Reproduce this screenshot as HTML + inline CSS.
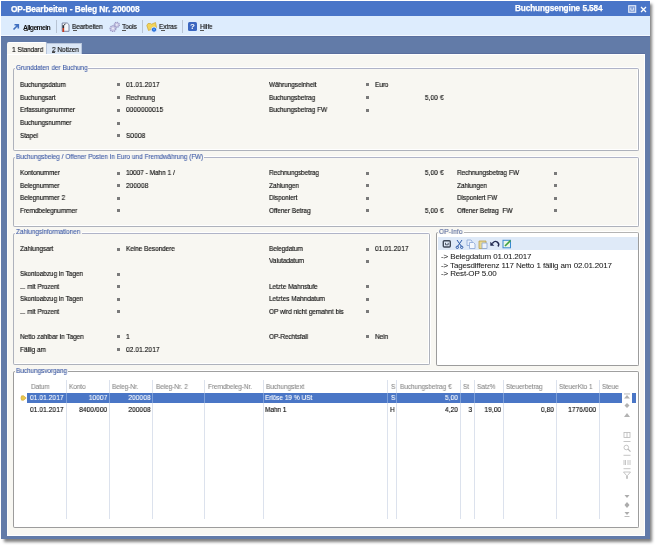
<!DOCTYPE html><html><head><meta charset="utf-8"><style>
html,body{margin:0;padding:0;background:#fff;width:659px;height:548px;overflow:hidden;position:relative;font-family:"Liberation Sans",sans-serif;}
body>div,body>svg{position:absolute;box-sizing:border-box;}
.t{line-height:10px;white-space:pre;will-change:transform;}
</style></head><body>
<div style="left:4px;top:4px;width:648px;height:538px;background:rgba(0,0,0,0.5);filter:blur(1.8px);"></div>
<div style="left:1px;top:1px;width:649px;height:538px;background:#627ba8;"></div>
<div style="left:1px;top:1px;width:649px;height:15px;background:#4975c8;"></div>
<div class="t" style="left:10.5px;top:4.29px;font-size:8.4px;letter-spacing:-0.15px;word-spacing:0.3px;color:#fff;font-weight:bold;-webkit-text-stroke:0.25px #fff;">OP-Bearbeiten - Beleg Nr. 200008</div>
<div class="t" style="right:57.00px;top:4.36px;font-size:8.2px;letter-spacing:-0.1px;word-spacing:0.3px;color:#fff;font-weight:bold;-webkit-text-stroke:0.25px #fff;">Buchungsengine 5.584</div>
<svg style="left:628px;top:5px" width="9" height="8"><rect x="0.7" y="0.7" width="7" height="6.6" fill="rgba(255,255,255,0.3)" stroke="#e4ecfa" stroke-width="1.1"/><path d="M2.8 2.6V5.2H5.6V2.6" stroke="#e4ecfa" stroke-width="0.9" fill="none"/></svg>
<svg style="left:640px;top:5.5px" width="7" height="7"><path d="M1 1L6 6M6 1L1 6" stroke="#fff" stroke-width="1.3"/></svg>
<div style="left:1px;top:16px;width:649px;height:20px;background:#ddecfd;"></div>
<div style="left:1px;top:35px;width:649px;height:1px;background:#f2f8ff;"></div>
<div style="left:1px;top:36px;width:649px;height:1px;background:#5a6f9e;"></div>
<div style="left:7px;top:53px;width:638px;height:1px;background:#5a6f9e;"></div>
<div style="left:7px;top:54px;width:638px;height:482px;background:#f8f7f2;"></div>
<div style="left:7px;top:54px;width:638px;height:1px;background:#fff;"></div>
<div style="left:7px;top:54px;width:1px;height:482px;background:#fcfdfc;"></div>
<div style="left:643.5px;top:54px;width:1.5px;height:482px;background:#fff;"></div>
<div style="left:7px;top:534.5px;width:638px;height:1.5px;background:#fff;"></div>
<div style="left:6.5px;top:42px;width:40px;height:12px;background:#f8f7f2;border-top:1px solid #fff;border-radius:2px 2px 0 0;"></div>
<div style="left:46px;top:43px;width:35.5px;height:11px;background:#dce8f7;border:1px solid #b8c6dc;border-bottom:none;"></div>
<div class="t" style="left:12.3px;top:44.60px;font-size:7.5px;letter-spacing:-0.12px;word-spacing:0.3px;color:#111;font-weight:normal;-webkit-text-stroke:0.16px #111;transform:scaleX(0.87);transform-origin:0 0;">1 Standard</div>
<div class="t" style="left:51.6px;top:44.80px;font-size:7.5px;letter-spacing:-0.12px;word-spacing:0.3px;color:#111;font-weight:normal;-webkit-text-stroke:0.16px #111;transform:scaleX(0.87);transform-origin:0 0;">2 Notizen</div>
<div style="left:51.8px;top:52.2px;width:3.5px;height:0.8px;background:#444;"></div>
<svg style="left:12px;top:23px" width="8" height="8"><path d="M1.5 6.5L6 2M2.5 1.8H6.3V5.6" stroke="#3f6fc0" stroke-width="1.6" fill="none"/></svg>
<div class="t" style="left:23.3px;top:22.61px;font-size:6.9px;letter-spacing:-0.65px;word-spacing:0.3px;color:#111;font-weight:bold;">Allgemein</div>
<div style="left:23.6px;top:29.9px;width:4px;height:0.7px;background:#555;"></div>
<div style="left:55.5px;top:20px;width:1px;height:13px;background:#b8c4d4;"></div>
<svg style="left:61px;top:21.5px" width="9" height="11"><path d="M1.2 1H6.3L8 2.7V9.3H1.2Z" fill="#f4f6fa" stroke="#6f7c98" stroke-width="0.9"/><path d="M2.3 3.2L2.3 6" stroke="#303038" stroke-width="1.7"/><path d="M2.3 6L2.3 10" stroke="#c83a20" stroke-width="1.7"/><path d="M3 3L4.5 2" stroke="#303038" stroke-width="0.9"/></svg>
<div class="t" style="left:72.4px;top:22.40px;font-size:7.5px;letter-spacing:-0.12px;word-spacing:0.3px;color:#111;font-weight:normal;-webkit-text-stroke:0.16px #111;transform:scaleX(0.87);transform-origin:0 0;">Bearbeiten</div>
<div style="left:72.6px;top:29.9px;width:4px;height:0.7px;background:#555;"></div>
<svg style="left:109px;top:21px" width="12" height="12"><circle cx="7.8" cy="3.8" r="2.6" fill="#c4c2e2" stroke="#9a98c4" stroke-width="1.1" stroke-dasharray="1.3 0.7"/><circle cx="7.8" cy="3.8" r="0.9" fill="#eeeef8"/><circle cx="4" cy="7.6" r="2.9" fill="#c8c6e4" stroke="#9a98c4" stroke-width="1.2" stroke-dasharray="1.4 0.7"/><circle cx="4" cy="7.6" r="1" fill="#eeeef8"/></svg>
<div class="t" style="left:121.7px;top:22.40px;font-size:7.5px;letter-spacing:-0.12px;word-spacing:0.3px;color:#111;font-weight:normal;-webkit-text-stroke:0.16px #111;transform:scaleX(0.87);transform-origin:0 0;">Tools</div>
<div style="left:121.9px;top:29.9px;width:4px;height:0.7px;background:#555;"></div>
<div style="left:141.8px;top:20px;width:1px;height:13px;background:#b8c4d4;"></div>
<svg style="left:146px;top:20.5px" width="12" height="12"><path d="M0.8 4.5L2 2.5H4.5L5.5 3.2L9.5 1.5L10.5 6.5L2.5 9.5Z" fill="#f2d45a" stroke="#c9a53a" stroke-width="0.7"/><circle cx="8" cy="8.6" r="2.6" fill="#1f6ad6" stroke="#e8f0ff" stroke-width="0.8"/><circle cx="8" cy="8.6" r="1" fill="#5aa0ff"/></svg>
<div class="t" style="left:158.8px;top:22.40px;font-size:7.5px;letter-spacing:-0.12px;word-spacing:0.3px;color:#111;font-weight:normal;-webkit-text-stroke:0.16px #111;transform:scaleX(0.87);transform-origin:0 0;">Extras</div>
<div style="left:161.3px;top:29.9px;width:3.5px;height:0.7px;background:#555;"></div>
<div style="left:182.3px;top:20px;width:1px;height:13px;background:#b8c4d4;"></div>
<div style="left:188px;top:22px;width:9px;height:9px;background:#3a66c0;border-radius:1.5px;color:#fff;font-size:8px;font-weight:bold;line-height:9px;text-align:center;">?</div>
<div class="t" style="left:199.6px;top:22.40px;font-size:7.5px;letter-spacing:-0.12px;word-spacing:0.3px;color:#111;font-weight:normal;-webkit-text-stroke:0.16px #111;transform:scaleX(0.87);transform-origin:0 0;">Hilfe</div>
<div style="left:199.8px;top:29.9px;width:4px;height:0.7px;background:#555;"></div>
<div style="left:13px;top:68px;width:626px;height:83px;border:1px solid #aeb2bc;border-radius:2px;border-top-color:#b0b4c8;box-shadow:0 -1px 0 #fff, inset 0 -1px 0 #fff, 1px 0 0 #fff, inset -1px 0 0 #fff;"></div>
<div style="left:14.5px;top:65px;width:73px;height:5px;background:#f8f7f2;"></div>
<div class="t" style="left:16px;top:62.80px;font-size:7.5px;letter-spacing:-0.12px;word-spacing:0.3px;color:#3d5aa6;font-weight:normal;-webkit-text-stroke:0.1px #3d5aa6;transform:scaleX(0.87);transform-origin:0 0;">Grunddaten der Buchung</div>
<div style="left:13px;top:157px;width:626px;height:70px;border:1px solid #aeb2bc;border-radius:2px;border-top-color:#b0b4c8;box-shadow:0 -1px 0 #fff, inset 0 -1px 0 #fff, 1px 0 0 #fff, inset -1px 0 0 #fff;"></div>
<div style="left:14.5px;top:154px;width:189px;height:5px;background:#f8f7f2;"></div>
<div class="t" style="left:16px;top:152.00px;font-size:7.5px;letter-spacing:-0.12px;word-spacing:0.3px;color:#3d5aa6;font-weight:normal;-webkit-text-stroke:0.1px #3d5aa6;transform:scaleX(0.87);transform-origin:0 0;">Buchungsbeleg / Offener Posten in Euro und Fremdwährung (FW)</div>
<div style="left:13px;top:233px;width:417px;height:132px;border:1px solid #aeb2bc;border-radius:2px;border-top-color:#b0b4c8;box-shadow:0 -1px 0 #fff, inset 0 -1px 0 #fff, 1px 0 0 #fff, inset -1px 0 0 #fff;"></div>
<div style="left:14.5px;top:230px;width:67px;height:5px;background:#f8f7f2;"></div>
<div class="t" style="left:16px;top:227.20px;font-size:7.5px;letter-spacing:-0.12px;word-spacing:0.3px;color:#3d5aa6;font-weight:normal;-webkit-text-stroke:0.1px #3d5aa6;transform:scaleX(0.87);transform-origin:0 0;">Zahlungsinformationen</div>
<div style="left:436px;top:232px;width:203px;height:134px;border:1px solid #9c9c9c;border-radius:2px;border-top-color:#b4b4b4;box-shadow:0 -1px 0 #fff, inset 0 -1px 0 #fff, 1px 0 0 #fff, inset -1px 0 0 #fff;background:#fff;"></div>
<div style="left:437.8px;top:229px;width:26px;height:5px;background:#f8f7f2;"></div>
<div class="t" style="left:439.3px;top:226.80px;font-size:7.5px;letter-spacing:0.2px;word-spacing:0.3px;color:#55689c;font-weight:normal;-webkit-text-stroke:0.1px #55689c;transform:scaleX(0.87);transform-origin:0 0;">OP-Info</div>
<div style="left:13px;top:371px;width:626px;height:157px;border:1px solid #9c9c9c;border-radius:2px;border-top-color:#a0a0a0;box-shadow:0 -1px 0 #fff, inset 0 -1px 0 #fff, 1px 0 0 #fff, inset -1px 0 0 #fff;background:#fff;"></div>
<div style="left:14.5px;top:368px;width:53px;height:5px;background:#f8f7f2;"></div>
<div class="t" style="left:16px;top:366.00px;font-size:7.5px;letter-spacing:-0.12px;word-spacing:0.3px;color:#3d5aa6;font-weight:normal;-webkit-text-stroke:0.1px #3d5aa6;transform:scaleX(0.87);transform-origin:0 0;">Buchungsvorgang</div>
<div class="t" style="left:20px;top:79.90px;font-size:7.5px;letter-spacing:-0.12px;word-spacing:0.3px;color:#111;font-weight:normal;-webkit-text-stroke:0.16px #111;transform:scaleX(0.87);transform-origin:0 0;">Buchungsdatum</div>
<div style="left:117.3px;top:83.40px;width:3px;height:3px;background:#7a7a7a;"></div>
<div class="t" style="left:125.9px;top:79.90px;font-size:7.5px;letter-spacing:0.12px;word-spacing:0.3px;color:#111;font-weight:normal;-webkit-text-stroke:0.16px #111;transform:scaleX(0.87);transform-origin:0 0;">01.01.2017</div>
<div class="t" style="left:20px;top:92.60px;font-size:7.5px;letter-spacing:-0.12px;word-spacing:0.3px;color:#111;font-weight:normal;-webkit-text-stroke:0.16px #111;transform:scaleX(0.87);transform-origin:0 0;">Buchungsart</div>
<div style="left:117.3px;top:96.10px;width:3px;height:3px;background:#7a7a7a;"></div>
<div class="t" style="left:125.9px;top:92.60px;font-size:7.5px;letter-spacing:-0.12px;word-spacing:0.3px;color:#111;font-weight:normal;-webkit-text-stroke:0.16px #111;transform:scaleX(0.87);transform-origin:0 0;">Rechnung</div>
<div class="t" style="left:20px;top:105.30px;font-size:7.5px;letter-spacing:-0.12px;word-spacing:0.3px;color:#111;font-weight:normal;-webkit-text-stroke:0.16px #111;transform:scaleX(0.87);transform-origin:0 0;">Erfassungsnummer</div>
<div style="left:117.3px;top:108.80px;width:3px;height:3px;background:#7a7a7a;"></div>
<div class="t" style="left:125.9px;top:105.30px;font-size:7.5px;letter-spacing:0.12px;word-spacing:0.3px;color:#111;font-weight:normal;-webkit-text-stroke:0.16px #111;transform:scaleX(0.87);transform-origin:0 0;">0000000015</div>
<div class="t" style="left:20px;top:118.00px;font-size:7.5px;letter-spacing:-0.12px;word-spacing:0.3px;color:#111;font-weight:normal;-webkit-text-stroke:0.16px #111;transform:scaleX(0.87);transform-origin:0 0;">Buchungsnummer</div>
<div style="left:117.3px;top:121.50px;width:3px;height:3px;background:#7a7a7a;"></div>
<div class="t" style="left:20px;top:130.60px;font-size:7.5px;letter-spacing:-0.12px;word-spacing:0.3px;color:#111;font-weight:normal;-webkit-text-stroke:0.16px #111;transform:scaleX(0.87);transform-origin:0 0;">Stapel</div>
<div style="left:117.3px;top:134.10px;width:3px;height:3px;background:#7a7a7a;"></div>
<div class="t" style="left:125.9px;top:130.60px;font-size:7.5px;letter-spacing:0.12px;word-spacing:0.3px;color:#111;font-weight:normal;-webkit-text-stroke:0.16px #111;transform:scaleX(0.87);transform-origin:0 0;">S0008</div>
<div class="t" style="left:269.4px;top:79.90px;font-size:7.5px;letter-spacing:-0.12px;word-spacing:0.3px;color:#111;font-weight:normal;-webkit-text-stroke:0.16px #111;transform:scaleX(0.87);transform-origin:0 0;">Währungseinheit</div>
<div style="left:366.3px;top:83.40px;width:3px;height:3px;background:#7a7a7a;"></div>
<div class="t" style="left:375.2px;top:79.90px;font-size:7.5px;letter-spacing:-0.12px;word-spacing:0.3px;color:#111;font-weight:normal;-webkit-text-stroke:0.16px #111;transform:scaleX(0.87);transform-origin:0 0;">Euro</div>
<div class="t" style="left:269.4px;top:92.60px;font-size:7.5px;letter-spacing:-0.12px;word-spacing:0.3px;color:#111;font-weight:normal;-webkit-text-stroke:0.16px #111;transform:scaleX(0.87);transform-origin:0 0;">Buchungsbetrag</div>
<div style="left:366.3px;top:96.10px;width:3px;height:3px;background:#7a7a7a;"></div>
<div class="t" style="left:269.4px;top:105.30px;font-size:7.5px;letter-spacing:-0.12px;word-spacing:0.3px;color:#111;font-weight:normal;-webkit-text-stroke:0.16px #111;transform:scaleX(0.87);transform-origin:0 0;">Buchungsbetrag FW</div>
<div style="left:366.3px;top:108.80px;width:3px;height:3px;background:#7a7a7a;"></div>
<div class="t" style="right:215.50px;top:92.60px;font-size:7.5px;letter-spacing:0.12px;word-spacing:0.3px;color:#111;font-weight:normal;-webkit-text-stroke:0.16px #111;transform:scaleX(0.87);transform-origin:100% 0;">5,00 €</div>
<div class="t" style="left:20px;top:168.20px;font-size:7.5px;letter-spacing:-0.12px;word-spacing:0.3px;color:#111;font-weight:normal;-webkit-text-stroke:0.16px #111;transform:scaleX(0.87);transform-origin:0 0;">Kontonummer</div>
<div style="left:117.3px;top:171.70px;width:3px;height:3px;background:#7a7a7a;"></div>
<div class="t" style="left:125.9px;top:168.20px;font-size:7.5px;letter-spacing:-0.12px;word-spacing:0.3px;color:#111;font-weight:normal;-webkit-text-stroke:0.16px #111;transform:scaleX(0.87);transform-origin:0 0;">10007 - Mahn 1 /</div>
<div class="t" style="left:20px;top:180.80px;font-size:7.5px;letter-spacing:-0.12px;word-spacing:0.3px;color:#111;font-weight:normal;-webkit-text-stroke:0.16px #111;transform:scaleX(0.87);transform-origin:0 0;">Belegnummer</div>
<div style="left:117.3px;top:184.30px;width:3px;height:3px;background:#7a7a7a;"></div>
<div class="t" style="left:125.9px;top:180.80px;font-size:7.5px;letter-spacing:0.12px;word-spacing:0.3px;color:#111;font-weight:normal;-webkit-text-stroke:0.16px #111;transform:scaleX(0.87);transform-origin:0 0;">200008</div>
<div class="t" style="left:20px;top:193.30px;font-size:7.5px;letter-spacing:-0.12px;word-spacing:0.3px;color:#111;font-weight:normal;-webkit-text-stroke:0.16px #111;transform:scaleX(0.87);transform-origin:0 0;">Belegnummer 2</div>
<div style="left:117.3px;top:196.80px;width:3px;height:3px;background:#7a7a7a;"></div>
<div class="t" style="left:20px;top:205.90px;font-size:7.5px;letter-spacing:-0.12px;word-spacing:0.3px;color:#111;font-weight:normal;-webkit-text-stroke:0.16px #111;transform:scaleX(0.87);transform-origin:0 0;">Fremdbelegnummer</div>
<div style="left:117.3px;top:209.40px;width:3px;height:3px;background:#7a7a7a;"></div>
<div class="t" style="left:269.4px;top:168.20px;font-size:7.5px;letter-spacing:-0.12px;word-spacing:0.3px;color:#111;font-weight:normal;-webkit-text-stroke:0.16px #111;transform:scaleX(0.87);transform-origin:0 0;">Rechnungsbetrag</div>
<div style="left:366.3px;top:171.70px;width:3px;height:3px;background:#7a7a7a;"></div>
<div class="t" style="left:269.4px;top:180.80px;font-size:7.5px;letter-spacing:-0.12px;word-spacing:0.3px;color:#111;font-weight:normal;-webkit-text-stroke:0.16px #111;transform:scaleX(0.87);transform-origin:0 0;">Zahlungen</div>
<div style="left:366.3px;top:184.30px;width:3px;height:3px;background:#7a7a7a;"></div>
<div class="t" style="left:269.4px;top:193.30px;font-size:7.5px;letter-spacing:-0.12px;word-spacing:0.3px;color:#111;font-weight:normal;-webkit-text-stroke:0.16px #111;transform:scaleX(0.87);transform-origin:0 0;">Disponiert</div>
<div style="left:366.3px;top:196.80px;width:3px;height:3px;background:#7a7a7a;"></div>
<div class="t" style="left:269.4px;top:205.90px;font-size:7.5px;letter-spacing:-0.12px;word-spacing:0.3px;color:#111;font-weight:normal;-webkit-text-stroke:0.16px #111;transform:scaleX(0.87);transform-origin:0 0;">Offener Betrag</div>
<div style="left:366.3px;top:209.40px;width:3px;height:3px;background:#7a7a7a;"></div>
<div class="t" style="right:215.50px;top:168.20px;font-size:7.5px;letter-spacing:0.12px;word-spacing:0.3px;color:#111;font-weight:normal;-webkit-text-stroke:0.16px #111;transform:scaleX(0.87);transform-origin:100% 0;">5,00 €</div>
<div class="t" style="right:215.50px;top:205.90px;font-size:7.5px;letter-spacing:0.12px;word-spacing:0.3px;color:#111;font-weight:normal;-webkit-text-stroke:0.16px #111;transform:scaleX(0.87);transform-origin:100% 0;">5,00 €</div>
<div class="t" style="left:456.7px;top:168.20px;font-size:7.5px;letter-spacing:-0.12px;word-spacing:0.3px;color:#111;font-weight:normal;-webkit-text-stroke:0.16px #111;transform:scaleX(0.87);transform-origin:0 0;">Rechnungsbetrag FW</div>
<div style="left:554.2px;top:171.70px;width:3px;height:3px;background:#7a7a7a;"></div>
<div class="t" style="left:456.7px;top:180.80px;font-size:7.5px;letter-spacing:-0.12px;word-spacing:0.3px;color:#111;font-weight:normal;-webkit-text-stroke:0.16px #111;transform:scaleX(0.87);transform-origin:0 0;">Zahlungen</div>
<div style="left:554.2px;top:184.30px;width:3px;height:3px;background:#7a7a7a;"></div>
<div class="t" style="left:456.7px;top:193.30px;font-size:7.5px;letter-spacing:-0.12px;word-spacing:0.3px;color:#111;font-weight:normal;-webkit-text-stroke:0.16px #111;transform:scaleX(0.87);transform-origin:0 0;">Disponiert FW</div>
<div style="left:554.2px;top:196.80px;width:3px;height:3px;background:#7a7a7a;"></div>
<div class="t" style="left:456.7px;top:205.90px;font-size:7.5px;letter-spacing:-0.12px;word-spacing:0.3px;color:#111;font-weight:normal;-webkit-text-stroke:0.16px #111;transform:scaleX(0.87);transform-origin:0 0;">Offener Betrag  FW</div>
<div style="left:554.2px;top:209.40px;width:3px;height:3px;background:#7a7a7a;"></div>
<div class="t" style="left:20px;top:244.00px;font-size:7.5px;letter-spacing:-0.12px;word-spacing:0.3px;color:#111;font-weight:normal;-webkit-text-stroke:0.16px #111;transform:scaleX(0.87);transform-origin:0 0;">Zahlungsart</div>
<div style="left:117.3px;top:247.50px;width:3px;height:3px;background:#7a7a7a;"></div>
<div class="t" style="left:125.9px;top:244.00px;font-size:7.5px;letter-spacing:-0.12px;word-spacing:0.3px;color:#111;font-weight:normal;-webkit-text-stroke:0.16px #111;transform:scaleX(0.87);transform-origin:0 0;">Keine Besondere</div>
<div class="t" style="left:20px;top:269.00px;font-size:7.5px;letter-spacing:-0.12px;word-spacing:0.3px;color:#111;font-weight:normal;-webkit-text-stroke:0.16px #111;transform:scaleX(0.87);transform-origin:0 0;">Skontoabzug in Tagen</div>
<div style="left:117.3px;top:272.50px;width:3px;height:3px;background:#7a7a7a;"></div>
<div class="t" style="left:20px;top:281.70px;font-size:7.5px;letter-spacing:-0.12px;word-spacing:0.3px;color:#111;font-weight:normal;-webkit-text-stroke:0.16px #111;transform:scaleX(0.87);transform-origin:0 0;">... mit Prozent</div>
<div style="left:117.3px;top:285.20px;width:3px;height:3px;background:#7a7a7a;"></div>
<div class="t" style="left:20px;top:294.20px;font-size:7.5px;letter-spacing:-0.12px;word-spacing:0.3px;color:#111;font-weight:normal;-webkit-text-stroke:0.16px #111;transform:scaleX(0.87);transform-origin:0 0;">Skontoabzug in Tagen</div>
<div style="left:117.3px;top:297.70px;width:3px;height:3px;background:#7a7a7a;"></div>
<div class="t" style="left:20px;top:306.80px;font-size:7.5px;letter-spacing:-0.12px;word-spacing:0.3px;color:#111;font-weight:normal;-webkit-text-stroke:0.16px #111;transform:scaleX(0.87);transform-origin:0 0;">... mit Prozent</div>
<div style="left:117.3px;top:310.30px;width:3px;height:3px;background:#7a7a7a;"></div>
<div class="t" style="left:20px;top:331.80px;font-size:7.5px;letter-spacing:-0.12px;word-spacing:0.3px;color:#111;font-weight:normal;-webkit-text-stroke:0.16px #111;transform:scaleX(0.87);transform-origin:0 0;">Netto zahlbar in Tagen</div>
<div style="left:117.3px;top:335.30px;width:3px;height:3px;background:#7a7a7a;"></div>
<div class="t" style="left:125.9px;top:331.80px;font-size:7.5px;letter-spacing:-0.12px;word-spacing:0.3px;color:#111;font-weight:normal;-webkit-text-stroke:0.16px #111;transform:scaleX(0.87);transform-origin:0 0;">1</div>
<div class="t" style="left:20px;top:344.60px;font-size:7.5px;letter-spacing:-0.12px;word-spacing:0.3px;color:#111;font-weight:normal;-webkit-text-stroke:0.16px #111;transform:scaleX(0.87);transform-origin:0 0;">Fällig am</div>
<div style="left:117.3px;top:348.10px;width:3px;height:3px;background:#7a7a7a;"></div>
<div class="t" style="left:125.9px;top:344.60px;font-size:7.5px;letter-spacing:0.12px;word-spacing:0.3px;color:#111;font-weight:normal;-webkit-text-stroke:0.16px #111;transform:scaleX(0.87);transform-origin:0 0;">02.01.2017</div>
<div class="t" style="left:269.4px;top:244.00px;font-size:7.5px;letter-spacing:-0.12px;word-spacing:0.3px;color:#111;font-weight:normal;-webkit-text-stroke:0.16px #111;transform:scaleX(0.87);transform-origin:0 0;">Belegdatum</div>
<div style="left:366.3px;top:247.50px;width:3px;height:3px;background:#7a7a7a;"></div>
<div class="t" style="left:375.2px;top:244.00px;font-size:7.5px;letter-spacing:0.12px;word-spacing:0.3px;color:#111;font-weight:normal;-webkit-text-stroke:0.16px #111;transform:scaleX(0.87);transform-origin:0 0;">01.01.2017</div>
<div class="t" style="left:269.4px;top:256.40px;font-size:7.5px;letter-spacing:-0.12px;word-spacing:0.3px;color:#111;font-weight:normal;-webkit-text-stroke:0.16px #111;transform:scaleX(0.87);transform-origin:0 0;">Valutadatum</div>
<div style="left:366.3px;top:259.90px;width:3px;height:3px;background:#7a7a7a;"></div>
<div class="t" style="left:269.4px;top:281.70px;font-size:7.5px;letter-spacing:-0.12px;word-spacing:0.3px;color:#111;font-weight:normal;-webkit-text-stroke:0.16px #111;transform:scaleX(0.87);transform-origin:0 0;">Letzte Mahnstufe</div>
<div style="left:366.3px;top:285.20px;width:3px;height:3px;background:#7a7a7a;"></div>
<div class="t" style="left:269.4px;top:294.20px;font-size:7.5px;letter-spacing:-0.12px;word-spacing:0.3px;color:#111;font-weight:normal;-webkit-text-stroke:0.16px #111;transform:scaleX(0.87);transform-origin:0 0;">Letztes Mahndatum</div>
<div style="left:366.3px;top:297.70px;width:3px;height:3px;background:#7a7a7a;"></div>
<div class="t" style="left:269.4px;top:306.80px;font-size:7.5px;letter-spacing:-0.12px;word-spacing:0.3px;color:#111;font-weight:normal;-webkit-text-stroke:0.16px #111;transform:scaleX(0.87);transform-origin:0 0;">OP wird nicht gemahnt bis</div>
<div style="left:366.3px;top:310.30px;width:3px;height:3px;background:#7a7a7a;"></div>
<div class="t" style="left:269.4px;top:331.80px;font-size:7.5px;letter-spacing:-0.12px;word-spacing:0.3px;color:#111;font-weight:normal;-webkit-text-stroke:0.16px #111;transform:scaleX(0.87);transform-origin:0 0;">OP-Rechtsfall</div>
<div style="left:366.3px;top:335.30px;width:3px;height:3px;background:#7a7a7a;"></div>
<div class="t" style="left:375.2px;top:331.80px;font-size:7.5px;letter-spacing:-0.12px;word-spacing:0.3px;color:#111;font-weight:normal;-webkit-text-stroke:0.16px #111;transform:scaleX(0.87);transform-origin:0 0;">Nein</div>
<div style="left:437.5px;top:236.5px;width:200px;height:13.5px;background:#dfeaf8;"></div>
<svg style="left:442px;top:238.5px" width="72" height="10"><rect x="1.3" y="1.8" width="7" height="6.2" rx="1" fill="none" stroke="#404a58" stroke-width="1.4"/><path d="M3.5 3.8V5.8H6.2V3.8" stroke="#404a58" stroke-width="0.9" fill="none"/><g stroke="#2d5aa8" stroke-width="1" fill="none"><path d="M15 1L19.5 7.5M20 1L15.5 7.5"/><circle cx="15.3" cy="8.3" r="1.2"/><circle cx="19.7" cy="8.3" r="1.2"/></g><path d="M25 1H29L30 2V6.5H25Z" fill="#e8f0fb" stroke="#8aa6d6" stroke-width="0.8"/><path d="M27.5 3.5H31.5L33 5V9.5H27.5Z" fill="#f4f8fd" stroke="#8aa6d6" stroke-width="0.8"/><path d="M37 2H44V9.5H37Z" fill="#e8d890" stroke="#b8a050" stroke-width="0.8"/><path d="M40 4H45V9.5H40Z" fill="#eef3fb" stroke="#8aa6d6" stroke-width="0.8"/><path d="M56 7.5A3 3 0 0 0 51 3.8L50.2 4.5" stroke="#222a50" stroke-width="1.4" fill="none"/><path d="M48.3 2.8V6.8H52.3Z" fill="#222a50"/><rect x="61" y="1.3" width="7.5" height="7.5" fill="#eaf6ea" stroke="#3a8ad0" stroke-width="1"/><path d="M63 7L68.5 1.5" stroke="#40a040" stroke-width="1.6"/></svg>
<div class="t" style="left:441.2px;top:252.03px;font-size:8px;letter-spacing:-0.2px;word-spacing:0.3px;color:#1a1a1a;font-weight:normal;-webkit-text-stroke:0.05px #1a1a1a;">-&gt; Belegdatum 01.01.2017</div>
<div class="t" style="left:441.2px;top:260.53px;font-size:8px;letter-spacing:-0.2px;word-spacing:0.3px;color:#1a1a1a;font-weight:normal;-webkit-text-stroke:0.05px #1a1a1a;">-&gt; Tagesdifferenz 117 Netto 1 fällig am 02.01.2017</div>
<div class="t" style="left:441.2px;top:269.03px;font-size:8px;letter-spacing:-0.2px;word-spacing:0.3px;color:#1a1a1a;font-weight:normal;-webkit-text-stroke:0.05px #1a1a1a;">-&gt; Rest-OP 5.00</div>
<div style="left:27px;top:392.6px;width:594.5px;height:10.6px;background:#4a76c6;"></div>
<div style="left:632px;top:392.6px;width:3.8px;height:10.6px;background:#4a76c6;"></div>
<div style="left:66.2px;top:380px;width:1px;height:138.5px;background:#dce2ed;"></div>
<div style="left:66.2px;top:392.6px;width:1px;height:10.6px;background:#7d9fd8;"></div>
<div style="left:108.9px;top:380px;width:1px;height:138.5px;background:#dce2ed;"></div>
<div style="left:108.9px;top:392.6px;width:1px;height:10.6px;background:#7d9fd8;"></div>
<div style="left:151.7px;top:380px;width:1px;height:138.5px;background:#dce2ed;"></div>
<div style="left:151.7px;top:392.6px;width:1px;height:10.6px;background:#7d9fd8;"></div>
<div style="left:204.0px;top:380px;width:1px;height:138.5px;background:#dce2ed;"></div>
<div style="left:204.0px;top:392.6px;width:1px;height:10.6px;background:#7d9fd8;"></div>
<div style="left:262.8px;top:380px;width:1px;height:138.5px;background:#dce2ed;"></div>
<div style="left:262.8px;top:392.6px;width:1px;height:10.6px;background:#7d9fd8;"></div>
<div style="left:387.2px;top:380px;width:1px;height:138.5px;background:#dce2ed;"></div>
<div style="left:387.2px;top:392.6px;width:1px;height:10.6px;background:#7d9fd8;"></div>
<div style="left:396.2px;top:380px;width:1px;height:138.5px;background:#dce2ed;"></div>
<div style="left:396.2px;top:392.6px;width:1px;height:10.6px;background:#7d9fd8;"></div>
<div style="left:460.2px;top:380px;width:1px;height:138.5px;background:#dce2ed;"></div>
<div style="left:460.2px;top:392.6px;width:1px;height:10.6px;background:#7d9fd8;"></div>
<div style="left:473.8px;top:380px;width:1px;height:138.5px;background:#dce2ed;"></div>
<div style="left:473.8px;top:392.6px;width:1px;height:10.6px;background:#7d9fd8;"></div>
<div style="left:502.8px;top:380px;width:1px;height:138.5px;background:#dce2ed;"></div>
<div style="left:502.8px;top:392.6px;width:1px;height:10.6px;background:#7d9fd8;"></div>
<div style="left:555.5px;top:380px;width:1px;height:138.5px;background:#dce2ed;"></div>
<div style="left:555.5px;top:392.6px;width:1px;height:10.6px;background:#7d9fd8;"></div>
<div style="left:598.7px;top:380px;width:1px;height:138.5px;background:#dce2ed;"></div>
<div style="left:598.7px;top:392.6px;width:1px;height:10.6px;background:#7d9fd8;"></div>
<div class="t" style="left:30.9px;top:381.70px;font-size:7.5px;letter-spacing:-0.12px;word-spacing:0.3px;color:#8a8a8a;font-weight:normal;-webkit-text-stroke:0.1px #8a8a8a;transform:scaleX(0.87);transform-origin:0 0;">Datum</div>
<div class="t" style="left:69px;top:381.70px;font-size:7.5px;letter-spacing:-0.12px;word-spacing:0.3px;color:#8a8a8a;font-weight:normal;-webkit-text-stroke:0.1px #8a8a8a;transform:scaleX(0.87);transform-origin:0 0;">Konto</div>
<div class="t" style="left:112.3px;top:381.70px;font-size:7.5px;letter-spacing:-0.12px;word-spacing:0.3px;color:#8a8a8a;font-weight:normal;-webkit-text-stroke:0.1px #8a8a8a;transform:scaleX(0.87);transform-origin:0 0;">Beleg-Nr.</div>
<div class="t" style="left:156.2px;top:381.70px;font-size:7.5px;letter-spacing:-0.12px;word-spacing:0.3px;color:#8a8a8a;font-weight:normal;-webkit-text-stroke:0.1px #8a8a8a;transform:scaleX(0.87);transform-origin:0 0;">Beleg-Nr. 2</div>
<div class="t" style="left:208.3px;top:381.70px;font-size:7.5px;letter-spacing:-0.12px;word-spacing:0.3px;color:#8a8a8a;font-weight:normal;-webkit-text-stroke:0.1px #8a8a8a;transform:scaleX(0.87);transform-origin:0 0;">Fremdbeleg-Nr.</div>
<div class="t" style="left:265.7px;top:381.70px;font-size:7.5px;letter-spacing:-0.12px;word-spacing:0.3px;color:#8a8a8a;font-weight:normal;-webkit-text-stroke:0.1px #8a8a8a;transform:scaleX(0.87);transform-origin:0 0;">Buchungstext</div>
<div class="t" style="left:390.7px;top:381.70px;font-size:7.5px;letter-spacing:-0.12px;word-spacing:0.3px;color:#8a8a8a;font-weight:normal;-webkit-text-stroke:0.1px #8a8a8a;transform:scaleX(0.87);transform-origin:0 0;">S</div>
<div class="t" style="left:400px;top:381.70px;font-size:7.5px;letter-spacing:-0.12px;word-spacing:0.3px;color:#8a8a8a;font-weight:normal;-webkit-text-stroke:0.1px #8a8a8a;transform:scaleX(0.87);transform-origin:0 0;">Buchungsbetrag €</div>
<div class="t" style="left:463.3px;top:381.70px;font-size:7.5px;letter-spacing:-0.12px;word-spacing:0.3px;color:#8a8a8a;font-weight:normal;-webkit-text-stroke:0.1px #8a8a8a;transform:scaleX(0.87);transform-origin:0 0;">St</div>
<div class="t" style="left:477.3px;top:381.70px;font-size:7.5px;letter-spacing:-0.12px;word-spacing:0.3px;color:#8a8a8a;font-weight:normal;-webkit-text-stroke:0.1px #8a8a8a;transform:scaleX(0.87);transform-origin:0 0;">Satz%</div>
<div class="t" style="left:506px;top:381.70px;font-size:7.5px;letter-spacing:-0.12px;word-spacing:0.3px;color:#8a8a8a;font-weight:normal;-webkit-text-stroke:0.1px #8a8a8a;transform:scaleX(0.87);transform-origin:0 0;">Steuerbetrag</div>
<div class="t" style="left:559px;top:381.70px;font-size:7.5px;letter-spacing:-0.12px;word-spacing:0.3px;color:#8a8a8a;font-weight:normal;-webkit-text-stroke:0.1px #8a8a8a;transform:scaleX(0.87);transform-origin:0 0;">SteuerKto 1</div>
<div class="t" style="left:602.3px;top:381.70px;font-size:7.5px;letter-spacing:-0.12px;word-spacing:0.3px;color:#8a8a8a;font-weight:normal;-webkit-text-stroke:0.1px #8a8a8a;transform:scaleX(0.87);transform-origin:0 0;">Steue</div>
<div class="t" style="left:30.3px;top:393.40px;font-size:7.5px;letter-spacing:0.12px;word-spacing:0.3px;color:#fff;font-weight:normal;-webkit-text-stroke:0.1px #fff;transform:scaleX(0.87);transform-origin:0 0;">01.01.2017</div>
<div class="t" style="right:551.30px;top:393.40px;font-size:7.5px;letter-spacing:0.12px;word-spacing:0.3px;color:#fff;font-weight:normal;-webkit-text-stroke:0.1px #fff;transform:scaleX(0.87);transform-origin:100% 0;">10007</div>
<div class="t" style="right:508.50px;top:393.40px;font-size:7.5px;letter-spacing:0.12px;word-spacing:0.3px;color:#fff;font-weight:normal;-webkit-text-stroke:0.1px #fff;transform:scaleX(0.87);transform-origin:100% 0;">200008</div>
<div class="t" style="left:265px;top:393.40px;font-size:7.5px;letter-spacing:-0.12px;word-spacing:0.3px;color:#fff;font-weight:normal;-webkit-text-stroke:0.1px #fff;transform:scaleX(0.87);transform-origin:0 0;">Erlöse 19 % USt</div>
<div class="t" style="left:390.7px;top:393.40px;font-size:7.5px;letter-spacing:-0.12px;word-spacing:0.3px;color:#fff;font-weight:normal;-webkit-text-stroke:0.1px #fff;transform:scaleX(0.87);transform-origin:0 0;">S</div>
<div class="t" style="right:201.30px;top:393.40px;font-size:7.5px;letter-spacing:0.12px;word-spacing:0.3px;color:#fff;font-weight:normal;-webkit-text-stroke:0.1px #fff;transform:scaleX(0.87);transform-origin:100% 0;">5,00</div>
<div class="t" style="left:30.3px;top:405.00px;font-size:7.5px;letter-spacing:0.12px;word-spacing:0.3px;color:#111;font-weight:normal;-webkit-text-stroke:0.16px #111;transform:scaleX(0.87);transform-origin:0 0;">01.01.2017</div>
<div class="t" style="right:551.30px;top:405.00px;font-size:7.5px;letter-spacing:0.12px;word-spacing:0.3px;color:#111;font-weight:normal;-webkit-text-stroke:0.16px #111;transform:scaleX(0.87);transform-origin:100% 0;">8400/000</div>
<div class="t" style="right:508.50px;top:405.00px;font-size:7.5px;letter-spacing:0.12px;word-spacing:0.3px;color:#111;font-weight:normal;-webkit-text-stroke:0.16px #111;transform:scaleX(0.87);transform-origin:100% 0;">200008</div>
<div class="t" style="left:265px;top:405.00px;font-size:7.5px;letter-spacing:-0.12px;word-spacing:0.3px;color:#111;font-weight:normal;-webkit-text-stroke:0.16px #111;transform:scaleX(0.87);transform-origin:0 0;">Mahn 1</div>
<div class="t" style="left:390.2px;top:405.00px;font-size:7.5px;letter-spacing:-0.12px;word-spacing:0.3px;color:#111;font-weight:normal;-webkit-text-stroke:0.16px #111;transform:scaleX(0.87);transform-origin:0 0;">H</div>
<div class="t" style="right:201.30px;top:405.00px;font-size:7.5px;letter-spacing:0.12px;word-spacing:0.3px;color:#111;font-weight:normal;-webkit-text-stroke:0.16px #111;transform:scaleX(0.87);transform-origin:100% 0;">4,20</div>
<div class="t" style="right:187.30px;top:405.00px;font-size:7.5px;letter-spacing:-0.12px;word-spacing:0.3px;color:#111;font-weight:normal;-webkit-text-stroke:0.16px #111;transform:scaleX(0.87);transform-origin:100% 0;">3</div>
<div class="t" style="right:158.00px;top:405.00px;font-size:7.5px;letter-spacing:0.12px;word-spacing:0.3px;color:#111;font-weight:normal;-webkit-text-stroke:0.16px #111;transform:scaleX(0.87);transform-origin:100% 0;">19,00</div>
<div class="t" style="right:105.00px;top:405.00px;font-size:7.5px;letter-spacing:0.12px;word-spacing:0.3px;color:#111;font-weight:normal;-webkit-text-stroke:0.16px #111;transform:scaleX(0.87);transform-origin:100% 0;">0,80</div>
<div class="t" style="right:62.30px;top:405.00px;font-size:7.5px;letter-spacing:0.12px;word-spacing:0.3px;color:#111;font-weight:normal;-webkit-text-stroke:0.16px #111;transform:scaleX(0.87);transform-origin:100% 0;">1776/000</div>
<svg style="left:20px;top:394.5px" width="7" height="7"><path d="M1.6 0.8H3.6L6.2 3L3.6 5.2H1.6Q0.3 3 1.6 0.8Z" fill="#eac84c" stroke="#c9a030" stroke-width="0.6"/></svg>
<svg style="left:622px;top:392px" width="10" height="132"><g fill="#b2b2b2" stroke="none"><rect x="2" y="1.5" width="6" height="0.9"/><path d="M5 3L8 6.5H2Z"/><path d="M5 11L7.5 13.5L5 16L2.5 13.5Z"/><path d="M5 21L8 25H2Z"/></g><g fill="none" stroke="#b8b8b8" stroke-width="0.8"><rect x="2" y="40.5" width="6" height="5"/><path d="M5 40.5V45.5"/><path d="M1.5 49.5H8.5"/><circle cx="4.3" cy="55.5" r="2.3"/><path d="M6 57.2L8.5 59.7" stroke-width="1.2"/><path d="M1.5 63.3H8.5"/><path d="M2 68V73M3.5 68V73M6 68V73M8 68V73" /><path d="M1.5 76.7H8.5"/><path d="M1.5 80H8.5L5.5 83.5V86.5L4.5 86.5V83.5Z"/></g><g fill="#acacac"><path d="M2.5 103H7.5L5 106Z"/><path d="M5 110L7.5 113L5 116L2.5 113Z"/><path d="M2.5 120H7.5L5 123Z"/><rect x="2.5" y="124" width="5" height="0.8"/></g></svg>
</body></html>
